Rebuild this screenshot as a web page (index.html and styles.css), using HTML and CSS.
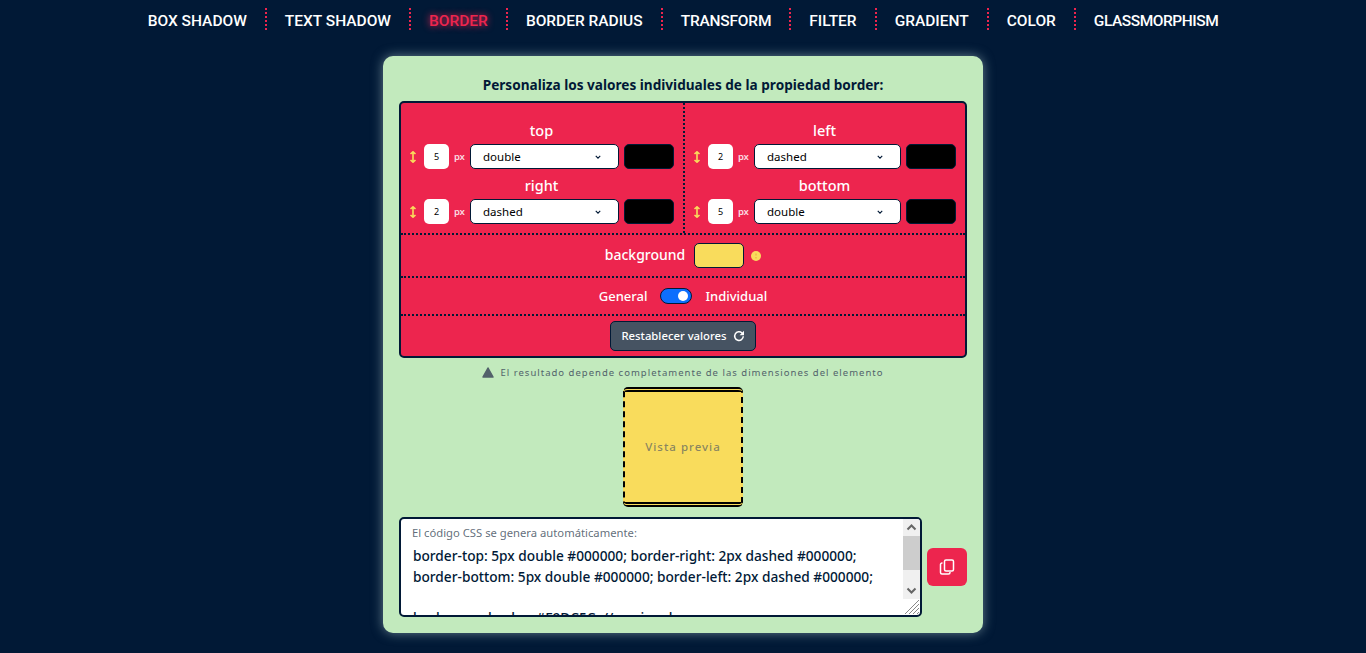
FILE: index.html
```html
<!DOCTYPE html>
<html lang="es">
<head>
<meta charset="utf-8">
<title>Border</title>
<link rel="stylesheet" href="styles.css">
</head>
<body>
<nav class="nav">
  <a class="nav-item">BOX SHADOW</a>
  <a class="nav-item">TEXT SHADOW</a>
  <a class="nav-item active">BORDER</a>
  <a class="nav-item">BORDER RADIUS</a>
  <a class="nav-item nav-snug">TRANSFORM</a>
  <a class="nav-item">FILTER</a>
  <a class="nav-item">GRADIENT</a>
  <a class="nav-item">COLOR</a>
  <a class="nav-item nav-tight">GLASSMORPHISM</a>
</nav>
<main class="main">
  <section class="card">
    <h1 class="title">Personaliza los valores individuales de la propiedad border:</h1>
    <div class="panel">
      <div class="sides">
        <div class="side side-left">
          <div class="field">
            <div class="field-label">top</div>
            <div class="controls">
              <svg class="arrow" viewBox="0 0 8 12"><path d="M4 1v10M1.5 3 4 .8 6.500 3M1.500 9 4 11.200 6.500 9"/></svg>
              <div class="num">5</div><span class="unit">px</span>
              <div class="select"><span>double</span><svg viewBox="0 0 8 5"><path d="M1 1l3 3 3-3"/></svg></div>
              <div class="swatch"></div>
            </div>
          </div>
          <div class="field">
            <div class="field-label">right</div>
            <div class="controls">
              <svg class="arrow" viewBox="0 0 8 12"><path d="M4 1v10M1.5 3 4 .8 6.500 3M1.500 9 4 11.200 6.500 9"/></svg>
              <div class="num">2</div><span class="unit">px</span>
              <div class="select"><span>dashed</span><svg viewBox="0 0 8 5"><path d="M1 1l3 3 3-3"/></svg></div>
              <div class="swatch"></div>
            </div>
          </div>
        </div>
        <div class="side side-right">
          <div class="field">
            <div class="field-label">left</div>
            <div class="controls">
              <svg class="arrow" viewBox="0 0 8 12"><path d="M4 1v10M1.5 3 4 .8 6.500 3M1.500 9 4 11.200 6.500 9"/></svg>
              <div class="num">2</div><span class="unit">px</span>
              <div class="select"><span>dashed</span><svg viewBox="0 0 8 5"><path d="M1 1l3 3 3-3"/></svg></div>
              <div class="swatch"></div>
            </div>
          </div>
          <div class="field">
            <div class="field-label">bottom</div>
            <div class="controls">
              <svg class="arrow" viewBox="0 0 8 12"><path d="M4 1v10M1.5 3 4 .8 6.500 3M1.500 9 4 11.200 6.500 9"/></svg>
              <div class="num">5</div><span class="unit">px</span>
              <div class="select"><span>double</span><svg viewBox="0 0 8 5"><path d="M1 1l3 3 3-3"/></svg></div>
              <div class="swatch"></div>
            </div>
          </div>
        </div>
      </div>
      <div class="row row-bg">
        <span class="bg-label">background</span>
        <div class="swatch swatch-yellow"></div>
        <svg class="dot" viewBox="0 0 10 10"><circle cx="5" cy="5" r="5"/><path d="M5 2.500v2M5 6v1.500"/></svg>
      </div>
      <div class="row row-toggle">
        <span class="toggle-label">General</span>
        <span class="toggle"><span class="knob"></span></span>
        <span class="toggle-label">Individual</span>
      </div>
      <div class="row-reset">
        <button class="reset" type="button">Restablecer valores
          <svg viewBox="0 0 12 12"><path d="M10.300 6.300A4.300 4.300 0 1 1 9 3L10.300 4.200"/><path class="fill" d="M11 .8v4.400H6.600z"/></svg>
        </button>
      </div>
    </div>
    <p class="note">
      <svg viewBox="0 0 12 11"><path d="M6 1 11 10H1z"/></svg>
      <span>El resultado depende completamente de las dimensiones del elemento</span>
    </p>
    <div class="preview">Vista previa</div>
    <div class="code-row">
      <div class="code">
        <div class="code-text">
          <div class="code-label">El código CSS se genera automáticamente:</div>
          <div class="code-lines">border-top: 5px double #000000; border-right: 2px dashed #000000;<br>border-bottom: 5px double #000000; border-left: 2px dashed #000000;<br><br>background-color: #F9DC5C; // opcional</div>
        </div>
        <div class="scrollbar">
          <svg class="sb-btn" viewBox="0 0 17 17"><path d="M4.500 10.500l4-4 4 4"/></svg>
          <div class="sb-track"><div class="sb-thumb"></div></div>
          <svg class="sb-btn" viewBox="0 0 17 17"><path d="M4.500 6.500l4 4 4-4"/></svg>
        </div>
        <svg class="grip" viewBox="0 0 16 16"><path d="M1 15 15 1M5 15 15 5M9 15l6-6M13 15l2-2"/></svg>
      </div>
      <button class="copy" type="button">
        <svg viewBox="0 0 16 16"><rect x="5.500" y="1" width="9" height="11" rx="1.500"/><path d="M3.500 4H3a1.500 1.500 0 0 0-1.500 1.500v8A1.500 1.500 0 0 0 3 15h6.500a1.500 1.500 0 0 0 1.500-1.500V13"/></svg>
      </button>
    </div>
  </section>
</main>
</body>
</html>
```
FILE: styles.css
```css
* { box-sizing: border-box; }
html, body { margin: 0; height: 653px; overflow: hidden; }
body {
  background: #011936;
  color: #011936;
  font-family: "Noto Sans", "Open Sans", sans-serif;
}
.nav {
  display: flex;
  justify-content: center;
  height: 41px;
  padding-top: 8px;
}
.nav-item {
  height: 22px;
  line-height: 26px;
  padding: 0 18px;
  border-right: 2px dotted #ed254e;
  color: #fff;
  font-family: Roboto, "Noto Sans", sans-serif;
  font-size: 15.500px;
  font-weight: 500;
  white-space: nowrap;
}
.nav-item:last-child { border-right: 0; }
.nav-snug { letter-spacing: -.2px; }
.nav-tight { letter-spacing: -.45px; }
.nav-item.active {
  color: #ed254e;
  text-shadow: 0 0 7px #ed254e;
}
.main { display: flex; justify-content: center; padding-top: 15px; }
.card {
  width: 600px;
  height: 577px;
  padding: 21px 16px 0;
  background: #c2eabd;
  border-radius: 10px;
  box-shadow: 0 0 12px rgba(200, 225, 225, .5);
}
.title {
  margin: 0 0 8px;
  height: 16px;
  line-height: 16px;
  text-align: center;
  font-size: 13.600px;
  font-weight: 700;
}
.panel {
  height: 257px;
  background: #ed254e;
  border: 2px solid #011936;
  border-radius: 5px;
  color: #fff;
}
.sides {
  display: flex;
  height: 132px;
  border-bottom: 2px dotted #011936;
}
.side { padding: 19px 9px 0 8px; }
.side-left { width: 284px; border-right: 2px dotted #011936; }
.side-right { width: 280px; }
.field { height: 55px; }
.field-label {
  height: 22px;
  line-height: 16px;
  text-align: center;
  font-size: 14.500px;
  font-weight: 500;
}
.controls { display: flex; align-items: center; gap: 5px; height: 25px; }
.arrow {
  width: 8px;
  height: 12px;
  margin-right: 2px;
  fill: none;
  stroke: #f9dc5c;
  stroke-width: 1.600;
}
.num {
  width: 25px;
  height: 25px;
  border-radius: 5px;
  background: #fff;
  color: #000;
  text-align: center;
  font-size: 9px;
  line-height: 25px;
}
.unit { width: 11px; font-size: 9.500px; font-weight: 600; color: #fbd9e0; letter-spacing: -.3px; }
.select {
  flex: 1;
  min-width: 0;
  display: flex;
  align-items: center;
  justify-content: space-between;
  height: 25px;
  padding: 0 17px 0 12px;
  background: #fff;
  border: 1px solid #011936;
  border-radius: 5px;
  color: #000;
  font-size: 11.500px;
}
.select svg { width: 6px; height: 4px; fill: none; stroke: #011936; stroke-width: 1.500; }
.swatch {
  width: 50px;
  height: 25px;
  background: #000;
  border: 1px solid #011936;
  border-radius: 5px;
}
.row {
  display: flex;
  align-items: center;
  justify-content: center;
  border-bottom: 2px dotted #011936;
  font-weight: 500;
}
.row-bg { height: 43px; font-size: 14px; }
.bg-label { margin-right: 9px; padding-bottom: 2px; }
.swatch-yellow { background: #f9dc5c; }
.dot { width: 10px; height: 10px; margin-left: 7px; fill: #f9dc5c; stroke: #eda63c; stroke-width: 1; }
.dot circle { stroke: none; }
.row-toggle { height: 38px; font-size: 13px; }
.toggle {
  display: flex;
  justify-content: flex-end;
  align-items: center;
  width: 32px;
  height: 16px;
  margin: 0 13px;
  padding: 0 3px;
  background: #0d6efd;
  border: 1px solid #011936;
  border-radius: 8px;
}
.knob { width: 10px; height: 10px; background: #fff; border-radius: 50%; }
.row-reset { display: flex; justify-content: center; padding-top: 5px; }
.reset {
  display: flex;
  align-items: center;
  justify-content: center;
  gap: 6px;
  width: 146px;
  height: 30px;
  padding: 0 0 2px;
  background: #465362;
  border: 1px solid #011936;
  border-radius: 5px;
  color: #fff;
  font: 500 11.300px "Noto Sans", sans-serif;
}
.reset svg { width: 12px; height: 12px; margin-top: 2px; fill: none; stroke: #fff; stroke-width: 1.500; }
.reset svg .fill { fill: #fff; stroke: none; }
.note {
  display: flex;
  align-items: center;
  justify-content: center;
  gap: 6px;
  height: 14px;
  margin: 7px 0 8px;
  color: #465362;
  font-size: 9.500px;
  letter-spacing: 1.010px;
  opacity: .9;
}
.note svg { width: 12px; height: 11px; fill: #465362; stroke: #465362; stroke-width: 1.500; stroke-linejoin: round; }
.preview {
  display: flex;
  align-items: center;
  justify-content: center;
  width: 120px;
  height: 120px;
  padding-bottom: 1px;
  margin: 0 auto 10px;
  background: #f9dc5c;
  border-style: double dashed;
  border-width: 5px 2px;
  border-color: #000;
  border-radius: 5px;
  color: rgba(70, 83, 98, .65);
  font-size: 11.500px;
  font-weight: 500;
  letter-spacing: 1px;
}
.code-row { display: flex; align-items: center; gap: 5px; }
.code {
  position: relative;
  display: flex;
  width: 523px;
  height: 100px;
  background: #fff;
  border: 2px solid #011936;
  border-radius: 5px;
  overflow: hidden;
}
.code-text { flex: 1; min-width: 0; padding: 6px 0 0 11px; overflow: hidden; }
.code-label { height: 21px; line-height: 16px; color: rgba(70, 83, 98, .85); font-size: 11.250px; }
.code-lines {
  padding-left: 1px;
  line-height: 20.500px;
  font-size: 13.700px;
  font-weight: 500;
  white-space: nowrap;
}
.scrollbar {
  display: flex;
  flex-direction: column;
  width: 17px;
  height: 80px;
  background: #f0f0f0;
}
.sb-btn { width: 17px; height: 17px; fill: none; stroke: #666; stroke-width: 2; }
.sb-track { flex: 1; }
.sb-thumb { height: 34px; background: #cdcdcd; }
.grip {
  position: absolute;
  right: 0;
  bottom: 0;
  width: 16px;
  height: 16px;
  fill: none;
  stroke: #888;
  stroke-width: 1;
}
.copy {
  display: flex;
  align-items: center;
  justify-content: center;
  width: 40px;
  height: 38px;
  padding: 0;
  background: #ed254e;
  border: 0;
  border-radius: 6px;
}
.copy svg { width: 16px; height: 16px; fill: none; stroke: #fff; stroke-width: 1.500; }
```
